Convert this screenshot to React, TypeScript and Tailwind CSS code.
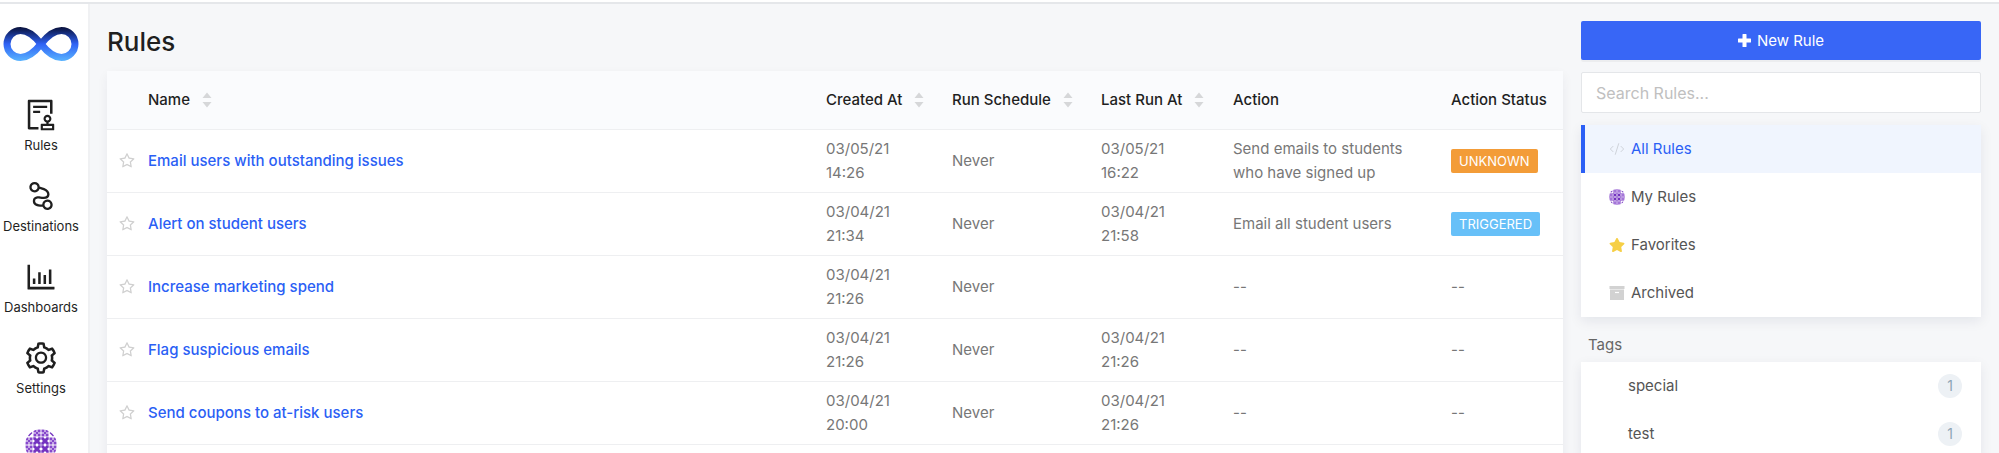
import { CodeXml } from "lucide-react";
import {
  AiOutlineAudit,
  AiOutlineBarChart,
  AiOutlineNodeIndex,
  AiOutlineSetting,
  AiOutlineStar,
} from "react-icons/ai";
import { FaStar } from "react-icons/fa";

type Rule = {
  name: string;
  created: [string, string];
  lastRun?: [string, string];
  action: string;
  status?: "UNKNOWN" | "TRIGGERED";
};

const rules: Rule[] = [
  { name: "Email users with outstanding issues", created: ["03/05/21", "14:26"], lastRun: ["03/05/21", "16:22"], action: "Send emails to students who have signed up", status: "UNKNOWN" },
  { name: "Alert on student users", created: ["03/04/21", "21:34"], lastRun: ["03/04/21", "21:58"], action: "Email all student users", status: "TRIGGERED" },
  { name: "Increase marketing spend", created: ["03/04/21", "21:26"], action: "--" },
  { name: "Flag suspicious emails", created: ["03/04/21", "21:26"], lastRun: ["03/04/21", "21:26"], action: "--" },
  { name: "Send coupons to at-risk users", created: ["03/04/21", "20:00"], lastRun: ["03/04/21", "21:26"], action: "--" },
];

const statusColor = {
  UNKNOWN: "bg-[#f39c38]",
  TRIGGERED: "bg-[#67c0f8]",
};

function Logo() {
  return (
    <svg viewBox="0 0 76 36" className="h-9 w-[76px]" fill="none" aria-hidden="true">
      <defs>
        <linearGradient id="logo" x1="0" y1="0" x2="0" y2="36" gradientUnits="userSpaceOnUse">
          <stop offset="0.05" stopColor="#0a1340" />
          <stop offset="0.5" stopColor="#2f62f5" />
          <stop offset="1" stopColor="#5cb8ff" />
        </linearGradient>
      </defs>
      <path
        d="M38 18C31 9 25 4.500 17.500 4.500A13.500 13.500 0 0 0 17.500 31.500C25 31.500 31 27 38 18C45 9 51 4.500 58.500 4.500A13.500 13.500 0 0 1 58.500 31.500C51 31.500 45 27 38 18Z"
        stroke="url(#logo)"
        strokeWidth="7"
      />
    </svg>
  );
}

const edgeTiles = [
  [8, 0], [16, 0], [0, 8], [24, 8], [0, 16], [24, 16], [8, 24], [16, 24],
];
const cornerTiles = [[0, 0], [24, 0], [0, 24], [24, 24]];
const centerTiles = [[8, 8], [16, 8], [8, 16], [16, 16]];

function Avatar({ id, className }: { id: string; className: string }) {
  return (
    <svg viewBox="0 0 32 32" className={className} aria-hidden="true">
      <clipPath id={id}>
        <circle cx="16" cy="16" r="16" />
      </clipPath>
      <g clipPath={`url(#${id})`}>
        <rect width="32" height="32" fill="#fff" />
        {centerTiles.map(([x, y]) => (
          <path
            key={`${x}-${y}`}
            transform={`translate(${x} ${y})`}
            d="M.3 .3H2.500L4 2L5.500 .3H7.700V2.500L6 4L7.700 5.500V7.700H5.500L4 6L2.500 7.700H.3V5.500L2 4L.3 2.500Z"
            fill="#7433c0"
          />
        ))}
        {edgeTiles.map(([x, y]) => (
          <path
            key={`${x}-${y}`}
            transform={`translate(${x} ${y})`}
            d="M.5 .5H3.500V3.500H.5ZM4.500 .5H7.500V3.500H4.500ZM.5 4.500H3.500V7.500H.5ZM4.500 4.500H7.500V7.500H4.500ZM3 3H5V5H3Z"
            fill="#8648cb"
          />
        ))}
        {cornerTiles.map(([x, y]) => (
          <path key={`${x}-${y}`} transform={`translate(${x} ${y})`} d="M4 .5L7.500 4L4 7.500L.5 4Z" fill="#7433c0" />
        ))}
      </g>
    </svg>
  );
}

function PlusIcon() {
  return (
    <svg viewBox="0 0 13 13" className="size-[13px]" fill="currentColor" aria-hidden="true">
      <path d="M5 0H8Q8.500 0 8.500 .5V4.500H12.500Q13 4.500 13 5V8Q13 8.500 12.500 8.500H8.500V12.500Q8.500 13 8 13H5Q4.500 13 4.500 12.500V8.500H.5Q0 8.500 0 8V5Q0 4.500 .5 4.500H4.500V.5Q4.500 0 5 0Z" />
    </svg>
  );
}

function ArchiveIcon() {
  return (
    <svg viewBox="0 0 16 16" className="size-4" aria-hidden="true">
      <path d="M.5 1H15.500V4H.5ZM1 4.500H15V15H1Z" fill="#d2d2d2" />
      <path d="M6 7.500H10" stroke="#fff" strokeWidth="1.200" />
    </svg>
  );
}

function Sorter() {
  return (
    <svg viewBox="0 0 10 16" className="h-4 w-[10px]" fill="#d6d7d9" aria-hidden="true">
      <path d="M5 .5L9.500 6H.5ZM5 15.500L.5 10H9.500Z" />
    </svg>
  );
}

const nav = [
  { label: "Rules", Icon: AiOutlineAudit },
  { label: "Destinations", Icon: AiOutlineNodeIndex },
  { label: "Dashboards", Icon: AiOutlineBarChart },
  { label: "Settings", Icon: AiOutlineSetting },
];

function SortHeader({ label }: { label: string }) {
  return (
    <th className="p-0 font-medium">
      <button type="button" className="flex items-center gap-3 font-medium whitespace-nowrap">
        {label}
        <Sorter />
      </button>
    </th>
  );
}

const filters = [
  { label: "All Rules", icon: <CodeXml className="size-4 text-[#cfd3da]" strokeWidth={1.5} />, active: true },
  { label: "My Rules", icon: <Avatar id="avatar-small" className="size-4" /> },
  { label: "Favorites", icon: <FaStar className="size-4 text-[#f6cf45]" /> },
  { label: "Archived", icon: <ArchiveIcon /> },
];

const tags = [
  { label: "special", count: 1 },
  { label: "test", count: 1 },
];

export default function App() {
  return (
    <div className="h-screen overflow-hidden bg-white pt-[2px] font-['Inter',sans-serif] text-[15px] leading-6 text-[#1f1f1f]">
      <div className="flex h-full border-t-2 border-[#e5e7ea] bg-[#f6f7f9]">
        <nav className="flex w-[90px] shrink-0 flex-col items-center border-r-2 border-[#f0f1f3] bg-white pt-[22px] pr-[6px] text-[13px]">
          <a href="#home" aria-label="Home" className="mb-[35px]">
            <Logo />
          </a>
          {nav.map(({ label, Icon }) => (
            <a key={label} href={`#${label.toLowerCase()}`} className="mb-[23px] flex flex-col items-center gap-[2px]">
              <Icon className="size-9" />
              <span className="leading-5">{label}</span>
            </a>
          ))}
          <a href="#profile" aria-label="Profile" className="mt-2">
            <Avatar id="avatar-large" className="size-8" />
          </a>
        </nav>
        <main className="min-w-0 flex-1 pt-5 pl-[17px]">
          <h1 className="mb-[11px] text-[26px] leading-9 font-medium">Rules</h1>
          <div className="rounded-t bg-white shadow-[0_4px_12px_rgba(0,30,60,0.06)]">
            <table className="w-full table-fixed border-collapse text-left">
              <colgroup>
                <col className="w-[41px]" />
                <col />
                <col className="w-[126px]" />
                <col className="w-[149px]" />
                <col className="w-[132px]" />
                <col className="w-[218px]" />
                <col className="w-[112px]" />
              </colgroup>
              <thead>
                <tr className="h-[58px] border-b border-[#eeeff1] bg-[#fafbfd]">
                  <td />
                  <SortHeader label="Name" />
                  <SortHeader label="Created At" />
                  <SortHeader label="Run Schedule" />
                  <SortHeader label="Last Run At" />
                  <th className="p-0 font-medium">Action</th>
                  <th className="p-0 font-medium whitespace-nowrap">Action Status</th>
                </tr>
              </thead>
              <tbody className="text-[#777]">
                {rules.map((r) => (
                  <tr key={r.name} className="h-[63px] border-b border-[#eeeff1]">
                    <td className="p-0 pl-[11px]">
                      <button type="button" aria-label={`Favorite ${r.name}`} className="block">
                        <AiOutlineStar className="size-[18px] text-[#d0d0d0]" />
                      </button>
                    </td>
                    <td className="p-0">
                      <a href="#rule" className="font-medium text-[#2b5ff5]">{r.name}</a>
                    </td>
                    <td className="p-0">{r.created[0]}<br />{r.created[1]}</td>
                    <td className="p-0">Never</td>
                    <td className="p-0">{r.lastRun && <>{r.lastRun[0]}<br />{r.lastRun[1]}</>}</td>
                    <td className="p-0 pr-10">{r.action}</td>
                    <td className="p-0">
                      {r.status ? (
                        <span className={`inline-block rounded-xs px-2 text-[13px] leading-6 text-white ${statusColor[r.status]}`}>{r.status}</span>
                      ) : "--"}
                    </td>
                  </tr>
                ))}
                <tr className="h-[63px]"><td colSpan={7} /></tr>
              </tbody>
            </table>
          </div>
        </main>
        <aside className="w-[436px] shrink-0 pt-[17px] pr-[18px] pl-[18px]">
          <button type="button" className="flex h-[39px] w-full items-center justify-center gap-[6px] rounded-xs bg-[#3866f6] text-white shadow-[0_2px_0_rgba(0,0,0,0.04)]">
            <PlusIcon />
            New Rule
          </button>
          <input
            type="search"
            aria-label="Search Rules"
            placeholder="Search Rules..."
            className="mt-3 block h-[41px] w-full rounded-xs border border-[#e4e6e9] bg-white px-[14px] text-base placeholder:text-[#c0c0c0]"
          />
          <ul className="mt-3 bg-white text-[#555] shadow-[0_4px_12px_rgba(0,30,60,0.08)]">
            {filters.map((f) => (
              <li key={f.label}>
                <a
                  href="#filter"
                  className={`flex h-12 items-center gap-[6px] border-l-4 pl-6 ${f.active ? "border-[#2b5ff5] bg-[#f0f5fe] text-[#2b5ff5]" : "border-transparent"}`}
                >
                  {f.icon}
                  {f.label}
                </a>
              </li>
            ))}
          </ul>
          <h2 className="mt-4 mb-[5px] pl-[7px] text-[#666]">Tags</h2>
          <ul className="bg-white text-[#555] shadow-[0_4px_12px_rgba(0,30,60,0.08)]">
            {tags.map((t) => (
              <li key={t.label}>
                <a href="#tag" className="flex h-12 items-center justify-between pr-[19px] pl-[47px]">
                  {t.label}
                  <span className="flex size-6 items-center justify-center rounded-full bg-[#edf1f5] text-sm text-[#8fa5b5]">{t.count}</span>
                </a>
              </li>
            ))}
          </ul>
        </aside>
      </div>
    </div>
  );
}
